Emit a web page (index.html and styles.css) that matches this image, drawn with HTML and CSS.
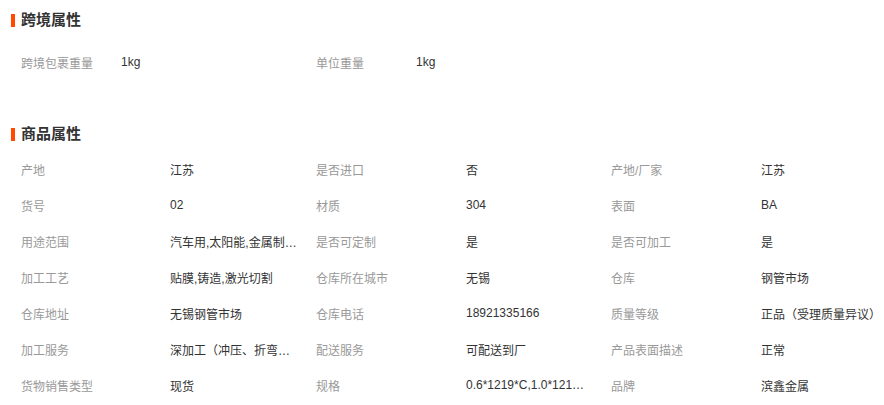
FILE: index.html
```html
<!DOCTYPE html>
<html lang="zh-CN">
<head>
  <meta charset="UTF-8">
  <title>商品属性</title>
  <link rel="stylesheet" href="styles.css">
</head>
<body>

<div class="attrs">
  <div class="section cross">
    <h3 class="sec-title">跨境属性</h3>
    <div class="grid grid-cross">
      <span class="lbl">跨境包裹重量</span><span class="val">1kg</span>
      <span class="lbl">单位重量</span><span class="val">1kg</span>
    </div>
  </div>

  <div class="section goods">
    <h3 class="sec-title">商品属性</h3>
    <div class="grid grid-goods">
      <span class="lbl">产地</span><span class="val">江苏</span>
      <span class="lbl">是否进口</span><span class="val">否</span>
      <span class="lbl">产地/厂家</span><span class="val">江苏</span>

      <span class="lbl">货号</span><span class="val">02</span>
      <span class="lbl">材质</span><span class="val">304</span>
      <span class="lbl">表面</span><span class="val">BA</span>

      <span class="lbl">用途范围</span><span class="val">汽车用,太阳能,金属制品,建筑用</span>
      <span class="lbl">是否可定制</span><span class="val">是</span>
      <span class="lbl">是否可加工</span><span class="val">是</span>

      <span class="lbl">加工工艺</span><span class="val">贴膜,铸造,激光切割</span>
      <span class="lbl">仓库所在城市</span><span class="val">无锡</span>
      <span class="lbl">仓库</span><span class="val">钢管市场</span>

      <span class="lbl">仓库地址</span><span class="val">无锡钢管市场</span>
      <span class="lbl">仓库电话</span><span class="val">18921335166</span>
      <span class="lbl">质量等级</span><span class="val wide">正品（受理质量异议）</span>

      <span class="lbl">加工服务</span><span class="val">深加工（冲压、折弯、剪切）</span>
      <span class="lbl">配送服务</span><span class="val">可配送到厂</span>
      <span class="lbl">产品表面描述</span><span class="val">正常</span>

      <span class="lbl">货物销售类型</span><span class="val">现货</span>
      <span class="lbl">规格</span><span class="val num">0.6*1219*C,1.0*1219*C</span>
      <span class="lbl">品牌</span><span class="val">滨鑫金属</span>
    </div>
  </div>
</div>

</body>
</html>
```

FILE: styles.css
```css
* { box-sizing: border-box; }
body {
  margin: 0;
  background: #fff;
  font-family: "Liberation Sans", "Noto Sans CJK SC", sans-serif;
  font-size: 12px;
  color: #333;
}
.attrs {
  padding: 8px 0 0 11px;
}
.sec-title {
  margin: 0;
  height: 24px;
  line-height: 24px;
  font-size: 15px;
  font-weight: bold;
  color: #333;
  display: flex;
  align-items: center;
  gap: 6px;
}
.sec-title:before {
  content: "";
  width: 4px;
  height: 13px;
  background: #ff4a00;
}
.grid {
  display: grid;
  padding-left: 10px;
  grid-auto-rows: 36px;
  align-items: center;
}
.grid-cross {
  margin-top: 12px;
  grid-template-columns: 100px 195px 100px 195px;
}
.goods {
  margin-top: 42px;
}
.grid-goods {
  margin-top: 5px;
  grid-template-columns: 149px 146px 150px 145px 150px 134px;
}
.lbl {
  color: #999;
  white-space: nowrap;
}
.val {
  color: #333;
  white-space: nowrap;
  overflow: hidden;
  text-overflow: ellipsis;
  max-width: 127px;
}
.val.num {
  max-width: 122px;
}
.val.wide {
  max-width: none;
  overflow: visible;
}
```
